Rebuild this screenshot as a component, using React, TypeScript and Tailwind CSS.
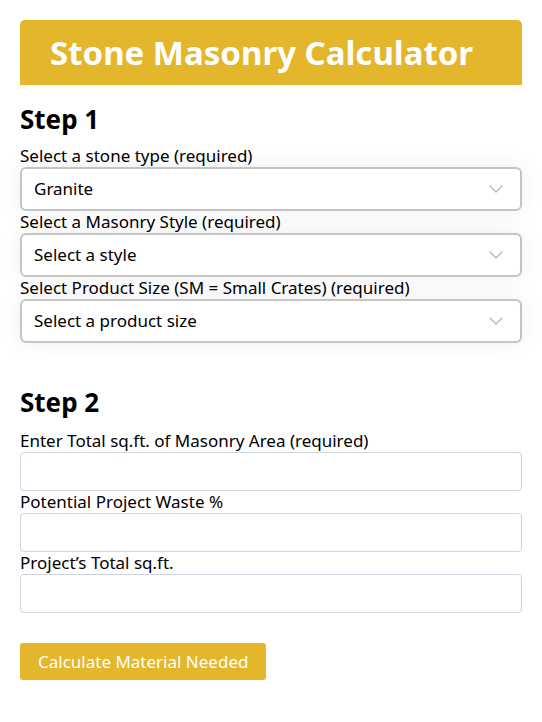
import React from "react";

const Chevron = () => (
  <svg width="14" height="8" viewBox="0 0 14 8" fill="none" className="absolute right-[17px] top-1/2 -translate-y-1/2">
    <path d="M1 1l6 6 6-6" stroke="#b8b8b8" strokeWidth="1.4" strokeLinecap="round" strokeLinejoin="round" />
  </svg>
);

const SelectBox = ({ label, value }: { label: string; value: string }) => (
  <div>
    <div className="text-[17px] leading-[22px] text-black">{label}</div>
    <div className="relative h-[44px] rounded-[6px] border-2 border-[#c4c4c4] bg-white shadow-[0_0_22px_rgba(0,0,0,0.07)] flex items-center pl-[12px] text-[17px] text-black">
      {value}
      <Chevron />
    </div>
  </div>
);

const InputBox = ({ label }: { label: string }) => (
  <div>
    <div className="text-[17px] leading-[22px] text-black">{label}</div>
    <div className="h-[39px] rounded-[4px] border border-[#cdd3e0] bg-white" />
  </div>
);

export default function App() {
  return (
    <div className="min-h-[722px] bg-white px-[20px] pt-[20px] font-['Noto_Sans',sans-serif]">
      <div className="h-[65px] rounded-t-[5px] bg-[#e4b62c] pl-[30px] flex items-center">
        <h1 className="text-[33px] font-bold text-white leading-none">Stone Masonry Calculator</h1>
      </div>
      <h2 className="mt-[17px] text-[26px] font-bold leading-[34px] text-black">Step 1</h2>
      <div className="mt-[9px]">
        <SelectBox label="Select a stone type (required)" value="Granite" />
        <SelectBox label="Select a Masonry Style (required)" value="Select a style" />
        <SelectBox label="Select Product Size (SM = Small Crates) (required)" value="Select a product size" />
      </div>
      <h2 className="mt-[42px] text-[26px] font-bold leading-[34px] text-black">Step 2</h2>
      <div className="mt-[11px]">
        <InputBox label="Enter Total sq.ft. of Masonry Area (required)" />
        <InputBox label="Potential Project Waste %" />
        <InputBox label="Project’s Total sq.ft." />
      </div>
      <button className="mt-[30px] h-[37px] rounded-[3px] bg-[#e4b62c] px-[18px] text-[17px] text-white">
        Calculate Material Needed
      </button>
    </div>
  );
}
